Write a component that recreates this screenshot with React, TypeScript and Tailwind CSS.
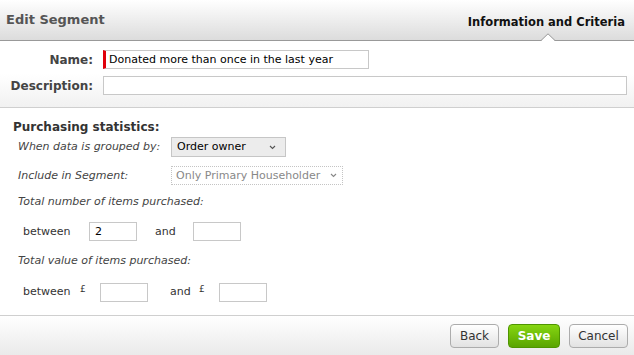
import React from 'react';

const font = "font-['DejaVu_Sans','Liberation_Sans',sans-serif]";

const TextBox: React.FC<{ value?: string; className?: string }> = ({ value, className = '' }) => (
  <div
    className={`h-[19px] border border-[#c8c8c8] bg-white px-[5px] text-[11px] leading-[17px] text-black ${className}`}
  >
    {value}
  </div>
);

const Chevron: React.FC<{ color?: string }> = ({ color = '#555' }) => (
  <svg width="7" height="5" viewBox="0 0 7 5" className="shrink-0">
    <path d="M1 1 L3.5 3.5 L6 1" fill="none" stroke={color} strokeWidth="1.1" />
  </svg>
);

const Button: React.FC<{ label: string; primary?: boolean; className?: string }> = ({ label, primary, className = '' }) =>
  primary ? (
    <button className={`h-[24px] rounded-[4px] border border-[#4f9500] bg-gradient-to-b from-[#86d611] to-[#5aa502] text-[12px] font-bold text-white ${className}`}>
      {label}
    </button>
  ) : (
    <button className={`h-[24px] rounded-[4px] border border-[#acacac] bg-gradient-to-b from-white to-[#e2e2e2] text-[12px] text-[#333] ${className}`}>
      {label}
    </button>
  );

export default function App() {
  return (
    <div className={`flex h-[355px] w-[634px] flex-col bg-white ${font} text-[11px] leading-[14px] text-[#333]`}>
      {/* header */}
      <div className="relative flex h-[41px] shrink-0 items-center justify-between border-b border-[#999] bg-gradient-to-b from-white to-[#dcdcdc] pl-[6px] pr-[9px]">
        <span className="text-[13px] font-bold text-[#555]">Edit Segment</span>
        <span className="mt-[3px] text-[11.5px] font-bold text-[#111]">Information and Criteria</span>
        <svg width="14" height="8" viewBox="0 0 14 8" className="absolute bottom-[-1px] left-[541px]">
          <path d="M0 8 L7 1 L14 8 Z" fill="#fff" />
          <path d="M0 7.5 L7 0.8 L14 7.5" fill="none" stroke="#999" strokeWidth="1" />
        </svg>
      </div>

      {/* name / description */}
      <div className="flex h-[67px] shrink-0 flex-col gap-[7px] border-b border-[#cfcfcf] bg-gradient-to-b from-white from-50% to-[#f1f1f1] pt-[9px]">
        <div className="flex items-center">
          <span className="w-[93px] text-right text-[12px] font-bold text-[#444]">Name:</span>
          <div className="ml-[10px] h-[19px] w-[266px] border border-l-[3px] border-[#c8c8c8] border-l-[#e0000b] bg-white pl-[3px] text-[11px] leading-[17px] text-black">
            Donated more than once in the last year
          </div>
        </div>
        <div className="flex items-center">
          <span className="w-[93px] text-right text-[12px] font-bold text-[#444]">Description:</span>
          <TextBox className="ml-[10px] w-[524px]" />
        </div>
      </div>

      {/* purchasing statistics */}
      <div className="flex flex-1 flex-col pl-[13px] pt-[12px]">
        <div className="text-[12px] font-bold leading-[14px] text-[#333]">Purchasing statistics:</div>
        <div className="mt-[3px] flex items-center pl-[5px]">
          <span className="w-[153px] italic text-[#444]">When data is grouped by:</span>
          <div className="flex h-[20px] w-[115px] items-center justify-between border border-[#c6c6c6] bg-[#ececec] pl-[5px] pr-[9px] text-[11px] text-black">
            Order owner
            <Chevron />
          </div>
        </div>
        <div className="mt-[9px] flex items-center pl-[5px]">
          <span className="w-[153px] italic text-[#444]">Include in Segment:</span>
          <div className="flex h-[19px] w-[172px] items-center justify-between border border-dotted border-[#c4c4c4] pl-[4px] pr-[5px] text-[11px] text-[#888]">
            Only Primary Householder
            <Chevron color="#888" />
          </div>
        </div>
        <div className="mt-[10px] pl-[5px] italic text-[#444]">Total number of items purchased:</div>
        <div className="mt-[13px] flex items-center pl-[10px] text-[#333]">
          <span className="w-[66px]">between</span>
          <TextBox value="2" className="w-[48px]" />
          <span className="ml-[18px] w-[38px]">and</span>
          <TextBox className="w-[48px]" />
        </div>
        <div className="mt-[13px] pl-[5px] italic text-[#444]">Total value of items purchased:</div>
        <div className="mt-[14px] flex items-center pl-[10px] text-[#333]">
          <span className="w-[57px]">between</span>
          <span className="mb-[6px] w-[20px] text-[9px]">£</span>
          <TextBox className="w-[48px]" />
          <span className="ml-[22px] w-[29px]">and</span>
          <span className="mb-[6px] w-[20px] text-[9px]">£</span>
          <TextBox className="w-[48px]" />
        </div>
      </div>

      {/* footer */}
      <div className="flex h-[40px] shrink-0 items-center justify-end gap-[9px] border-t border-[#cfcfcf] bg-gradient-to-b from-white to-[#eaeaea] pr-[6px]">
        <Button label="Back" className="w-[49px]" />
        <Button label="Save" primary className="w-[52px]" />
        <Button label="Cancel" className="w-[59px]" />
      </div>
    </div>
  );
}
